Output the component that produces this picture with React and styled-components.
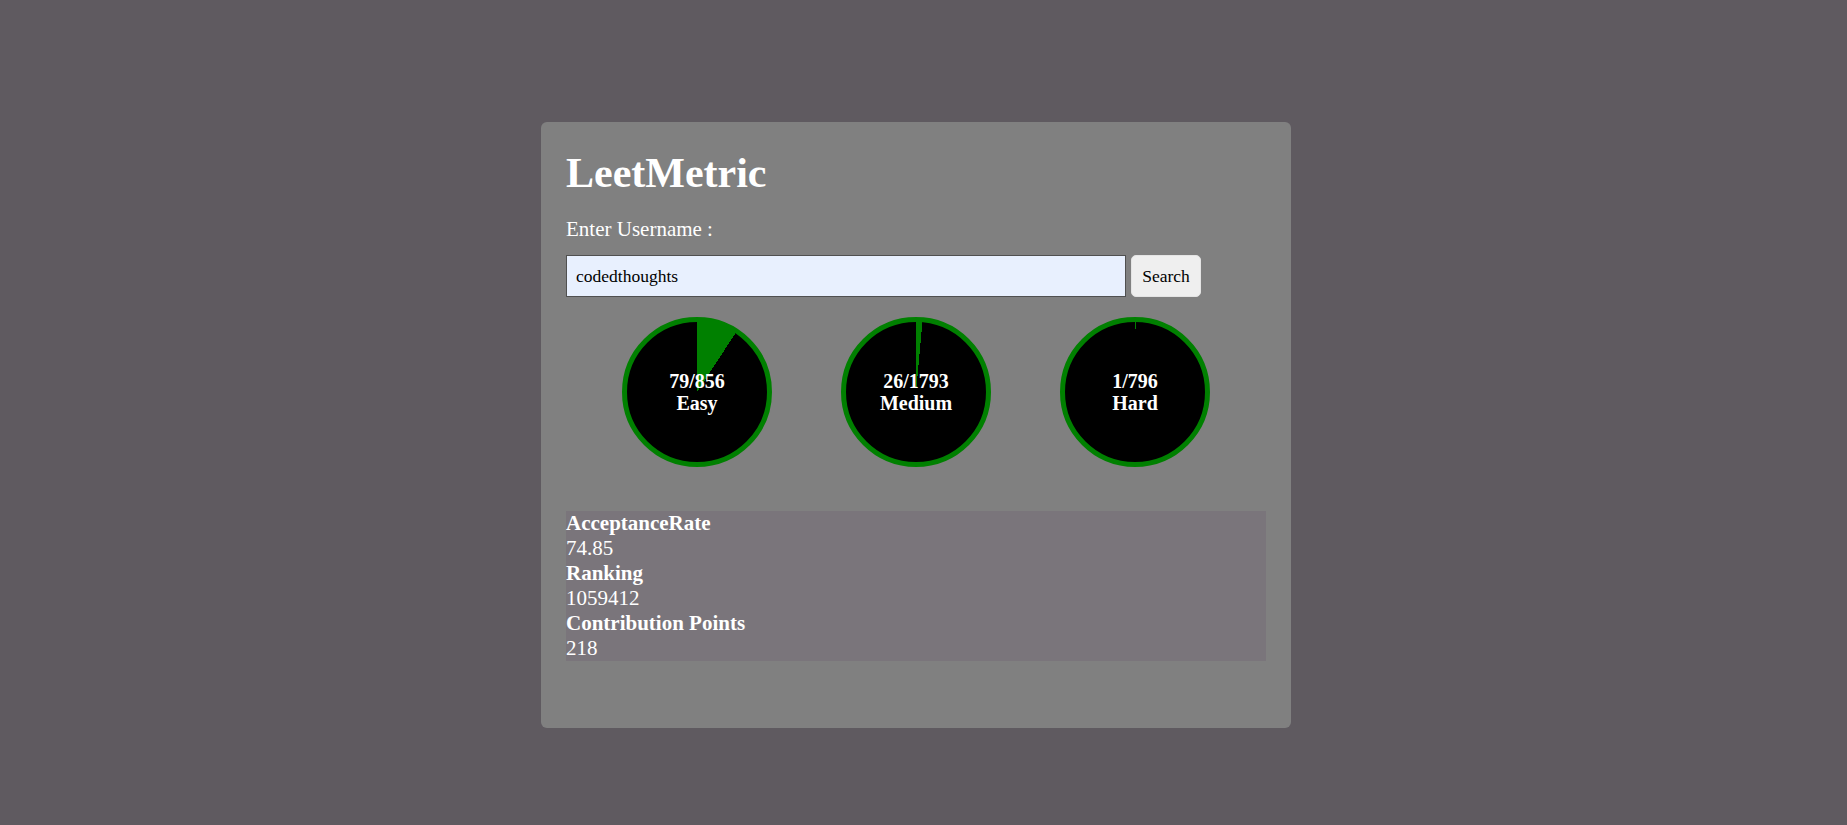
import React from 'react';
import styled, { createGlobalStyle } from 'styled-components';

const GlobalStyle = createGlobalStyle`
  html, body {
    margin: 0;
    padding: 0;
    background-color: #5f5a60;
    font-family: "Liberation Serif", "Times New Roman", serif;
  }
`;

const stats = [
  { label: 'Easy', solved: 79, total: 856 },
  { label: 'Medium', solved: 26, total: 1793 },
  { label: 'Hard', solved: 1, total: 796 },
];

const details = [
  { title: 'AcceptanceRate', value: '74.85' },
  { title: 'Ranking', value: '1059412' },
  { title: 'Contribution Points', value: '218' },
];

export default function App() {
  return (
    <>
      <GlobalStyle />
      <Page>
        <Card>
          <Title>LeetMetric</Title>
          <Label>Enter Username :</Label>
          <SearchRow>
            <UserInput defaultValue="codedthoughts" />
            <SearchButton>Search</SearchButton>
          </SearchRow>
          <Progress>
            {stats.map((s) => {
              const pct = (s.solved / s.total) * 100;
              return (
                <Circle key={s.label} style={{ '--pct': `${pct}%` }}>
                  <CircleText>
                    {s.solved}/{s.total}
                    <br />
                    {s.label}
                  </CircleText>
                </Circle>
              );
            })}
          </Progress>
          <StatsBox>
            {details.map((d) => (
              <div key={d.title}>
                <StatTitle>{d.title}</StatTitle>
                <StatValue>{d.value}</StatValue>
              </div>
            ))}
          </StatsBox>
        </Card>
      </Page>
    </>
  );
}

const Page = styled.div`
  min-height: 825px;
  box-sizing: border-box;
  display: flex;
  justify-content: center;
  align-items: flex-start;
  padding: 122px 15px 0 0;
`;

const Card = styled.div`
  width: 750px;
  height: 606px;
  box-sizing: border-box;
  background-color: #808080;
  border-radius: 6px;
  padding: 27px 25px 0 25px;
  color: #ffffff;
`;

const Title = styled.h1`
  margin: 0;
  font-size: 42px;
  line-height: 48px;
  font-weight: 700;
`;

const Label = styled.p`
  margin: 20px 0 0 0;
  font-size: 21px;
  line-height: 24px;
`;

const SearchRow = styled.div`
  display: flex;
  align-items: center;
  gap: 5px;
  margin-top: 14px;
`;

const UserInput = styled.input`
  width: 560px;
  height: 42px;
  box-sizing: border-box;
  border: 1px solid #505050;
  background-color: #e8f0fe;
  padding: 0 9px;
  font-family: "Liberation Serif", "Times New Roman", serif;
  font-size: 17.5px;
  color: #000000;
  outline: none;
`;

const SearchButton = styled.button`
  width: 70px;
  height: 42px;
  box-sizing: border-box;
  border: 1px solid #e4e4e4;
  border-radius: 5px;
  background-color: #efefef;
  font-family: "Liberation Serif", "Times New Roman", serif;
  font-size: 17.5px;
  color: #000000;
  padding: 0;
`;

const Progress = styled.div`
  display: flex;
  justify-content: center;
  gap: 69px;
  margin-top: 20px;
`;

const Circle = styled.div`
  width: 150px;
  height: 150px;
  box-sizing: border-box;
  border-radius: 50%;
  border: 5px solid #008000;
  background: conic-gradient(#008000 0 var(--pct), #000000 var(--pct) 100%);
  display: flex;
  align-items: center;
  justify-content: center;
`;

const CircleText = styled.span`
  font-size: 20px;
  font-weight: 700;
  line-height: 22.5px;
  text-align: center;
  color: #ffffff;
`;

const StatsBox = styled.div`
  margin-top: 44px;
  background-color: #7a757b;
  height: 150px;
  font-size: 21px;
  line-height: 25px;
`;

const StatTitle = styled.div`
  font-weight: 700;
`;

const StatValue = styled.div`
  font-weight: 400;
`;
